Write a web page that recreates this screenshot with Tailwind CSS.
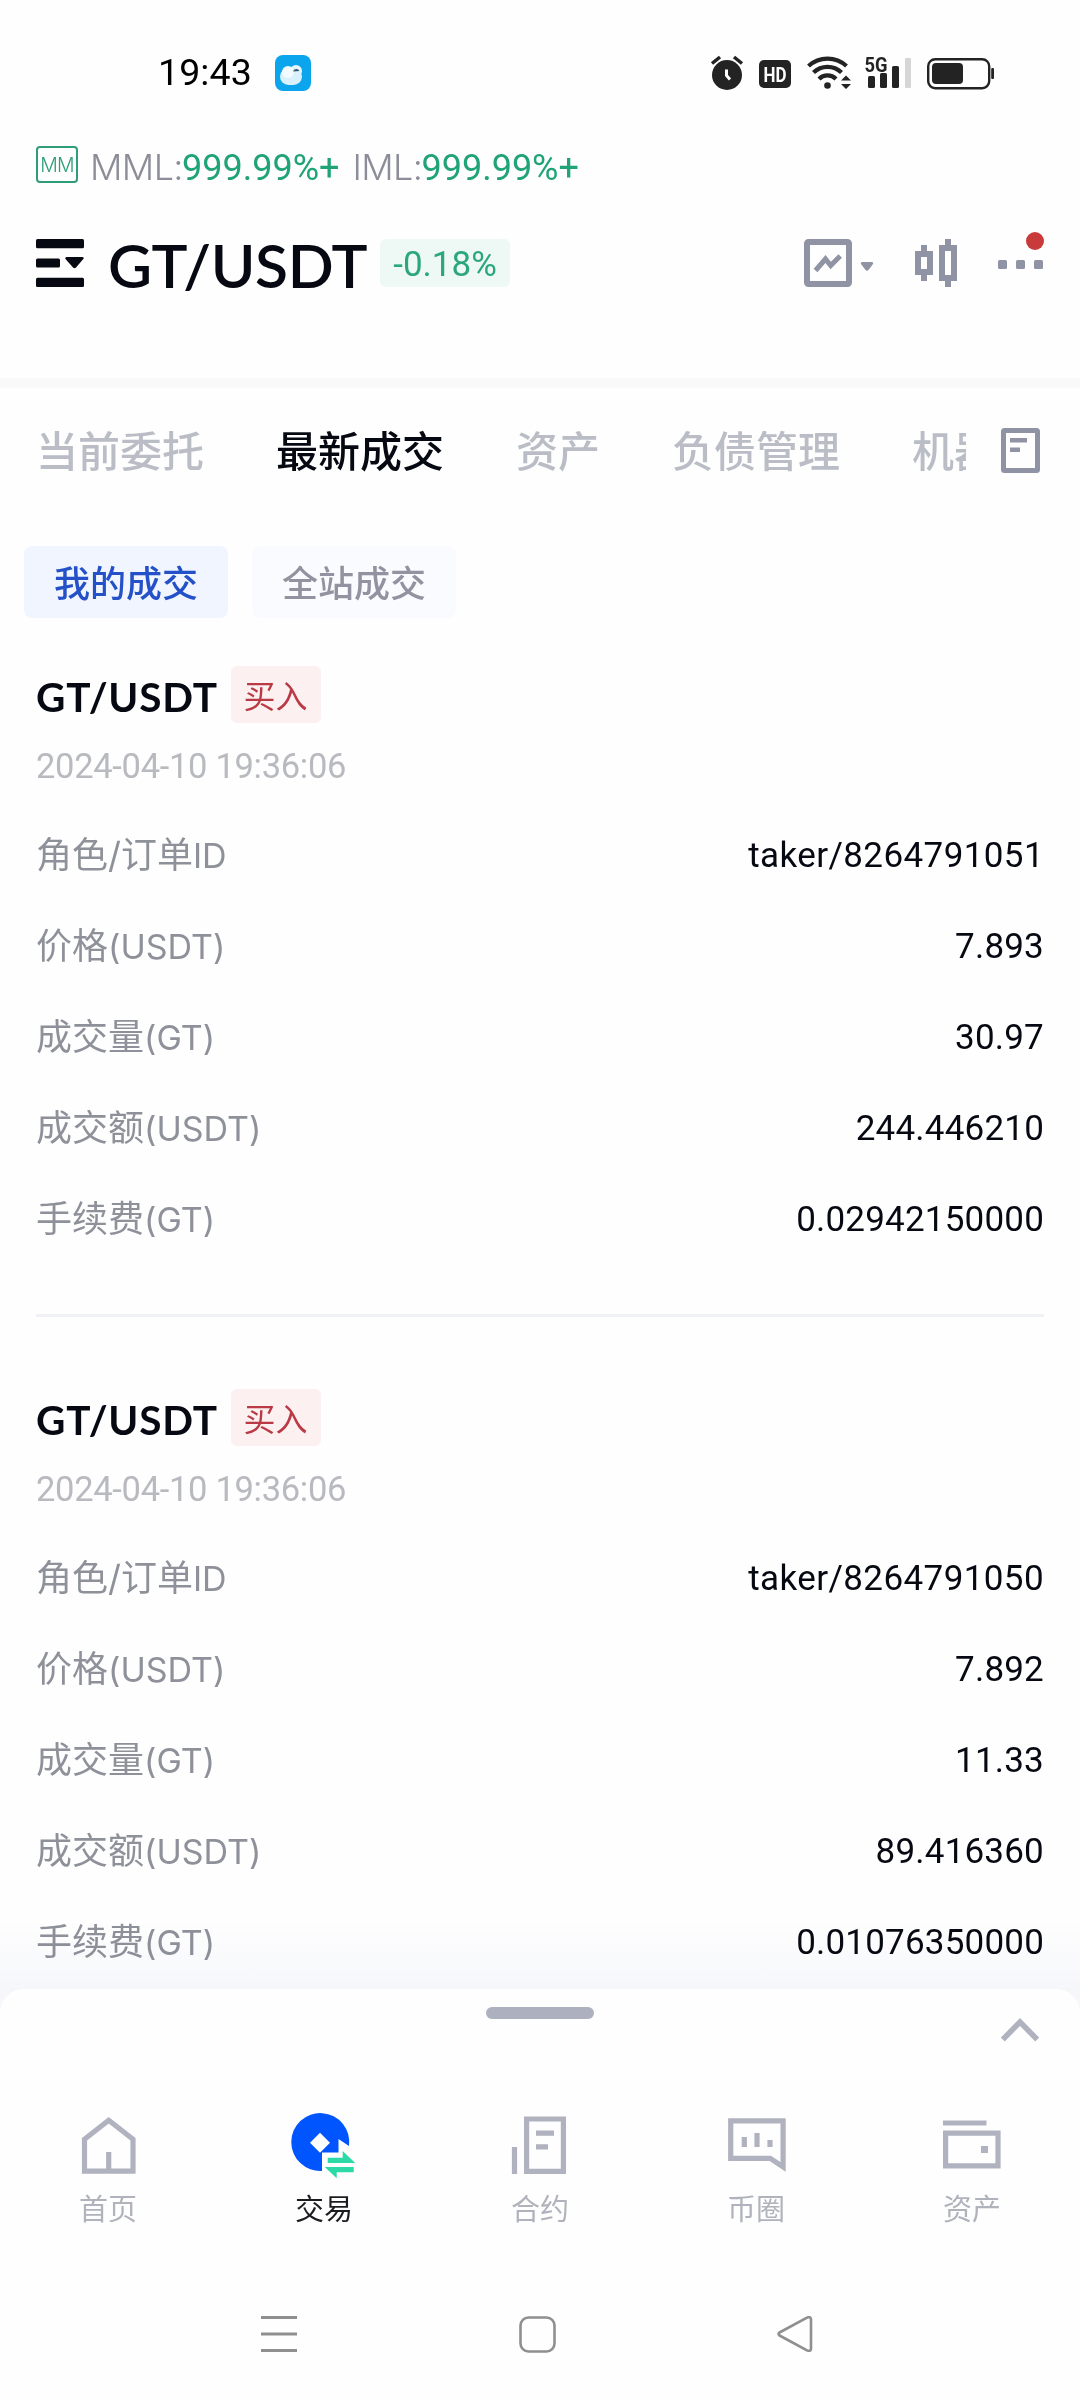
<!DOCTYPE html>
<html lang="zh-CN">
<head>
<meta charset="utf-8">
<title>GT/USDT</title>
<script src="https://cdn.jsdelivr.net/npm/@tailwindcss/browser@4"></script>
</head>
<body class="bg-[#fefefe] font-['Roboto','Noto_Sans_CJK_SC',sans-serif] text-[#070912]">
<div class="w-[1080px] h-[2400px] overflow-hidden flex flex-col whitespace-nowrap">

  <!-- status bar -->
  <div class="h-[146px] shrink-0 flex items-center pl-[158px] pr-[86px]">
    <span class="w-[117px] text-[37.5px] leading-none text-black tracking-[0.1px]">19:43</span>
    <svg width="36" height="36" viewBox="0 0 36 36">
      <rect width="36" height="36" rx="8" fill="#0aa5ec"/>
      <circle cx="21" cy="16" r="6" fill="#e8f7fe"/>
      <rect x="5" y="13" width="22" height="17" rx="8.500" fill="#d9f1fc"/>
      <circle cx="13" cy="17" r="6" fill="#f4fbfe"/>
      <path d="M18 16.500a3.500 3.500 0 0 1 6.500-0.500z" fill="#3b5b6c"/>
    </svg>
    <svg class="ml-auto" width="284" height="36" viewBox="710 54 284 36" fill="#232323">
      <circle cx="727" cy="74" r="15"/>
      <path d="M712 62.500l8-6.500M742 62.500l-8-6.500" stroke="#232323" stroke-width="3.500" fill="none"/>
      <path d="M726.500 68.500v6l3.500 4" stroke="#fff" stroke-width="3" fill="none"/>
      <rect x="759" y="59" width="32" height="28" rx="5"/>
      <text x="763.500" y="81" font-size="21" font-weight="700" fill="#fff" textLength="23" lengthAdjust="spacingAndGlyphs">HD</text>
      <g fill="none" stroke="#232323" stroke-width="4.200">
        <path d="M808.500 65a28 28 0 0 1 38 0"/>
        <path d="M813.500 71.500a20 20 0 0 1 28 0"/>
        <path d="M819 78a12 12 0 0 1 17 0"/>
      </g>
      <circle cx="827.500" cy="84.500" r="3.300"/>
      <path d="M846 74.500l5 5h-10zM846 88l5-5h-10z"/>
      <text x="864.500" y="70.500" font-size="20" font-weight="700" textLength="23" lengthAdjust="spacingAndGlyphs">5G</text>
      <rect x="868" y="75" width="7" height="12" rx="1.500"/>
      <rect x="880" y="72" width="7" height="15" rx="1.500"/>
      <rect x="892" y="65" width="7" height="22" rx="1.500"/>
      <rect x="905" y="57" width="6" height="30" rx="1" fill="#d6d6d6"/>
      <rect x="928.200" y="58.200" width="61" height="29" rx="7" fill="none" stroke="#232323" stroke-width="2.400"/>
      <rect x="932" y="62" width="31" height="21" rx="4"/>
      <rect x="991.200" y="67" width="2.800" height="11" rx="1"/>
    </svg>
  </div>

  <!-- margin levels -->
  <div class="h-[37px] shrink-0 flex items-center pl-9">
    <span class="w-[42px] h-[37px] rounded-[4px] border-2 border-[#2f9d78] flex items-center justify-center pt-[2px] text-[#2f9d78] font-['Inter'] font-light text-[19.5px] tracking-[-0.7px]">MM</span>
    <span class="ml-[12px] pt-[6px] flex items-baseline leading-none text-[#8c8d98]">
      <span class="w-[92px] font-['Inter'] font-light text-[36px] tracking-[-0.6px]">MML:</span>
      <span class="text-[36px] text-[#20a376]">999.99%+</span>
      <span class="ml-[13px] w-[69px] font-['Inter'] font-light text-[36px] tracking-[-0.6px]">IML:</span>
      <span class="text-[36px] text-[#20a376]">999.99%+</span>
    </span>
  </div>

  <!-- pair header -->
  <div class="mt-[56px] h-[48px] shrink-0 flex items-center pl-9 pr-9">
    <svg width="48" height="48" viewBox="0 0 48 48" fill="#070912">
      <rect width="48" height="9.300" rx="1.500"/>
      <rect y="19.500" width="24" height="9" rx="1.500"/>
      <path d="M30.500 18h16q2 0.500 0.800 2l-7.300 8.500q-1.500 1.500-3 0l-7.500-8.500q-0.800-1.500 1-2z"/>
      <rect y="38.700" width="48" height="9.300" rx="1.500"/>
    </svg>
    <h1 class="ml-[24px] pt-[4px] w-[272px] leading-[48px] font-['Lato'] font-semibold text-[60.500px] tracking-[-0.4px]">GT/USDT</h1>
    <span class="w-[130px] h-[48px] rounded-[6px] bg-[#eef8f4] text-[#2ba77c] text-[35px] leading-[51px] text-center">-0.18%</span>
    <svg class="ml-auto -mr-2 -mt-2" width="248" height="56" viewBox="804 231 248 56" fill="#8f93a3">
      <rect x="807" y="242" width="42" height="42" rx="1.500" fill="none" stroke="#8f93a3" stroke-width="6"/>
      <path d="M815.500 270.500l10-11.500 5.200 6.500 9.500-9.500" fill="none" stroke="#8f93a3" stroke-width="5"/>
      <path d="M862 262h10q2 0.300 1 2l-4.500 6q-1.500 1.500-3 0l-4.500-6q-1-1.700 1-2z"/>
      <path d="M921 245h6v6h6v24h-6v6h-6v-6h-6v-24h6zm0 12v12h6v-12z" fill-rule="evenodd"/>
      <path d="M945 239h6v6h6v36h-6v6h-6v-6h-6v-36h6zm0 12v24h6v-24z" fill-rule="evenodd"/>
      <rect x="998" y="260" width="9" height="9" rx="1.500"/>
      <rect x="1016" y="260" width="9" height="9" rx="1.500"/>
      <rect x="1034" y="260" width="9" height="9" rx="1.500"/>
      <circle cx="1035" cy="241" r="9" fill="#c93a3a"/>
    </svg>
  </div>

  <div class="mt-[91px] h-[10px] shrink-0 bg-[#f9f9fa]"></div>

  <!-- tabs -->
  <div class="h-[124px] shrink-0 flex items-center pl-9 pr-10">
    <div class="w-[930px] flex gap-[72px] overflow-hidden pb-[2px] font-['Noto_Sans_CJK_SC'] font-medium text-[42px] leading-[60px] text-[#babdc6]">
      <span>当前委托</span><span class="text-[#070912]">最新成交</span><span>资产</span><span>负债管理</span><span>机器人</span>
    </div>
    <svg class="ml-auto" width="39" height="45" viewBox="0 0 39 45" fill="#8f93a3">
      <rect x="2.500" y="2.500" width="34" height="40" rx="1" fill="none" stroke="#8f93a3" stroke-width="5"/>
      <rect x="9" y="10" width="17" height="4.500"/><rect x="9" y="19.500" width="10" height="4.500"/>
    </svg>
  </div>

  <!-- filter pills -->
  <div class="mt-[34px] h-[72px] shrink-0 flex gap-6 pl-6 font-['Noto_Sans_CJK_SC'] font-medium text-[36px] leading-[70px] text-center">
    <span class="w-[204px] rounded-[8px] bg-[#f0f5ff] text-[#2450c8]">我的成交</span>
    <span class="w-[204px] rounded-[8px] bg-[#fafbfe] text-[#9194a0]">全站成交</span>
  </div>

  <!-- trade records -->
  <div id="list" class="mt-[48px] h-[1323px] shrink-0 overflow-hidden px-9"></div>

  <!-- bottom sheet -->
  <div class="relative h-[411px] shrink-0">
    <div class="absolute inset-x-0 -top-[70px] h-[94px] bg-linear-to-b from-[#f3f5fa]/0 to-[#f5f6fb]/80 to-75% mix-blend-multiply"></div>
    <div class="relative h-full bg-[#fefefe] rounded-t-[24px] flex flex-col">
      <div class="h-[90px] shrink-0 flex justify-center items-start pt-[18px] relative">
        <span class="w-[108px] h-[12px] rounded-full bg-[#adb1bf]"></span>
        <svg class="absolute right-[40px] top-[28px]" width="40" height="26" viewBox="0 0 40 26"><path d="M2.800 22.500L20 5l17.200 17.500" fill="none" stroke="#b0b3bf" stroke-width="5.500"/></svg>
      </div>
      <div class="grid grid-cols-5 h-[166px] text-[29px] font-['Noto_Sans_CJK_SC'] text-[#b0b3bb] justify-items-center">
        <div class="flex flex-col items-center pt-[27px]">
          <svg width="72" height="78" viewBox="72 2106 72 78" fill="none" stroke="#b0b3bf" stroke-width="5.200"><path d="M84.500 2139.200l24.200-19 24.300 19v32h-48.500z"/><path d="M108.700 2152v19"/></svg>
          <span class="leading-[46px]">首页</span>
        </div>
        <div class="flex flex-col items-center pt-[27px]">
          <svg width="72" height="78" viewBox="288 2106 72 78">
            <path d="M322 2171a29 29 0 1 1 27-25l-10.500-7v13.500h-16.500z" fill="#05f"/>
            <path d="M320 2132.700l10 10-10 10-10-10z" fill="#fff"/>
            <path d="M327.700 2157.700h15v-6.700l12.500 12h-27.500zM324.700 2167h29v5.300h-17v6z" fill="#2bdaa6"/>
          </svg>
          <span class="leading-[46px] text-[#1b1c20]">交易</span>
        </div>
        <div class="flex flex-col items-center pt-[27px]">
          <svg width="72" height="78" viewBox="504 2106 72 78" fill="none" stroke="#b0b3bf" stroke-width="5.200"><path d="M526.600 2119h36.800v52.400h-36.800zM514.500 2147v27M536 2133.200h18M536 2146.800h12"/></svg>
          <span class="leading-[46px]">合约</span>
        </div>
        <div class="flex flex-col items-center pt-[27px]">
          <svg width="72" height="78" viewBox="720 2106 72 78" fill="none" stroke="#b0b3bf" stroke-width="5.200"><path d="M730.700 2120.900h52.400v46l-12.900-8.500h-39.500z"/><path d="M744.300 2137v10M757 2133v14M770 2140v7"/></svg>
          <span class="leading-[46px]">币圈</span>
        </div>
        <div class="flex flex-col items-center pt-[27px]">
          <svg width="72" height="78" viewBox="936 2106 72 78" fill="none" stroke="#b0b3bf" stroke-width="5.200"><path d="M943 2123h43.500M945.600 2133.200h52.400v32.700h-52.400z"/><rect x="981" y="2146" width="7" height="7" fill="#b0b3bf" stroke="none"/></svg>
          <span class="leading-[46px]">资产</span>
        </div>
      </div>
      <div class="flex items-center justify-between h-[155px] pl-[261px] pr-[267px] pt-[23px]">
        <svg width="36" height="36" viewBox="0 0 36 36" stroke="#8f8f8f" stroke-width="2.800"><path d="M0 1.500h36M0 18h36M0 34.500h36"/></svg>
        <svg width="37" height="37" viewBox="0 0 37 37" fill="none" stroke="#8f8f8f" stroke-width="2.600"><rect x="1.500" y="1.500" width="34" height="34" rx="8"/></svg>
        <svg width="36" height="36" viewBox="0 0 36 36" fill="none" stroke="#8f8f8f" stroke-width="2.600" stroke-linejoin="round"><path d="M2.500 16.500L30 1.600q4-1.500 4 2v28.800q0 3.500-4 2L2.500 19.500q-2-1.500 0-3z"/></svg>
      </div>
    </div>
  </div>
</div>

<script>
const trades = [
  ['taker/8264791051', '7.893', '30.97', '244.446210', '0.02942150000'],
  ['taker/8264791050', '7.892', '11.33', '89.416360', '0.01076350000'],
];
const labels = [['角色/订单', 'ID'], ['价格', '(USDT)'], ['成交量', '(GT)'], ['成交额', '(USDT)'], ['手续费', '(GT)']];
document.getElementById('list').innerHTML = trades.map((t, i) => `
  <section>
    <div class="h-[57px] flex items-center">
      <h2 class="w-[195px] pt-[4px] font-['Lato'] font-bold text-[40.500px] leading-[54px] tracking-[0.8px]">GT/USDT</h2>
      <span class="w-[90px] h-[57px] rounded-[6px] bg-[#fdf0f0] text-[#b93a44] text-center font-['Noto_Sans_CJK_SC'] text-[32px] leading-[56px] pr-px">买入</span>
    </div>
    <div class="h-[87px] leading-[87px] text-[34.500px] tracking-[-0.3px] text-[#b8babf]">2024-04-10 19:36:06</div>
    ${labels.map((l, j) => `<div class="h-[91px] leading-[91px] flex justify-between text-[36px]">
      <span class="font-['Inter','Noto_Sans_CJK_SC'] text-[#8e9199]">${l[0]}<span class="text-[34px]">${l[1]}</span></span>
      <span class="text-[35px] ${j ? 'tracking-[0.2px]' : 'tracking-[0.4px]'}">${t[j]}</span></div>`).join('')}
  </section>
  ${i === 0 ? '<div class="mt-[49px] mb-[72px] h-[3px] bg-[#f0f1f4]"></div>' : ''}`).join('');
</script>
</body>
</html>
